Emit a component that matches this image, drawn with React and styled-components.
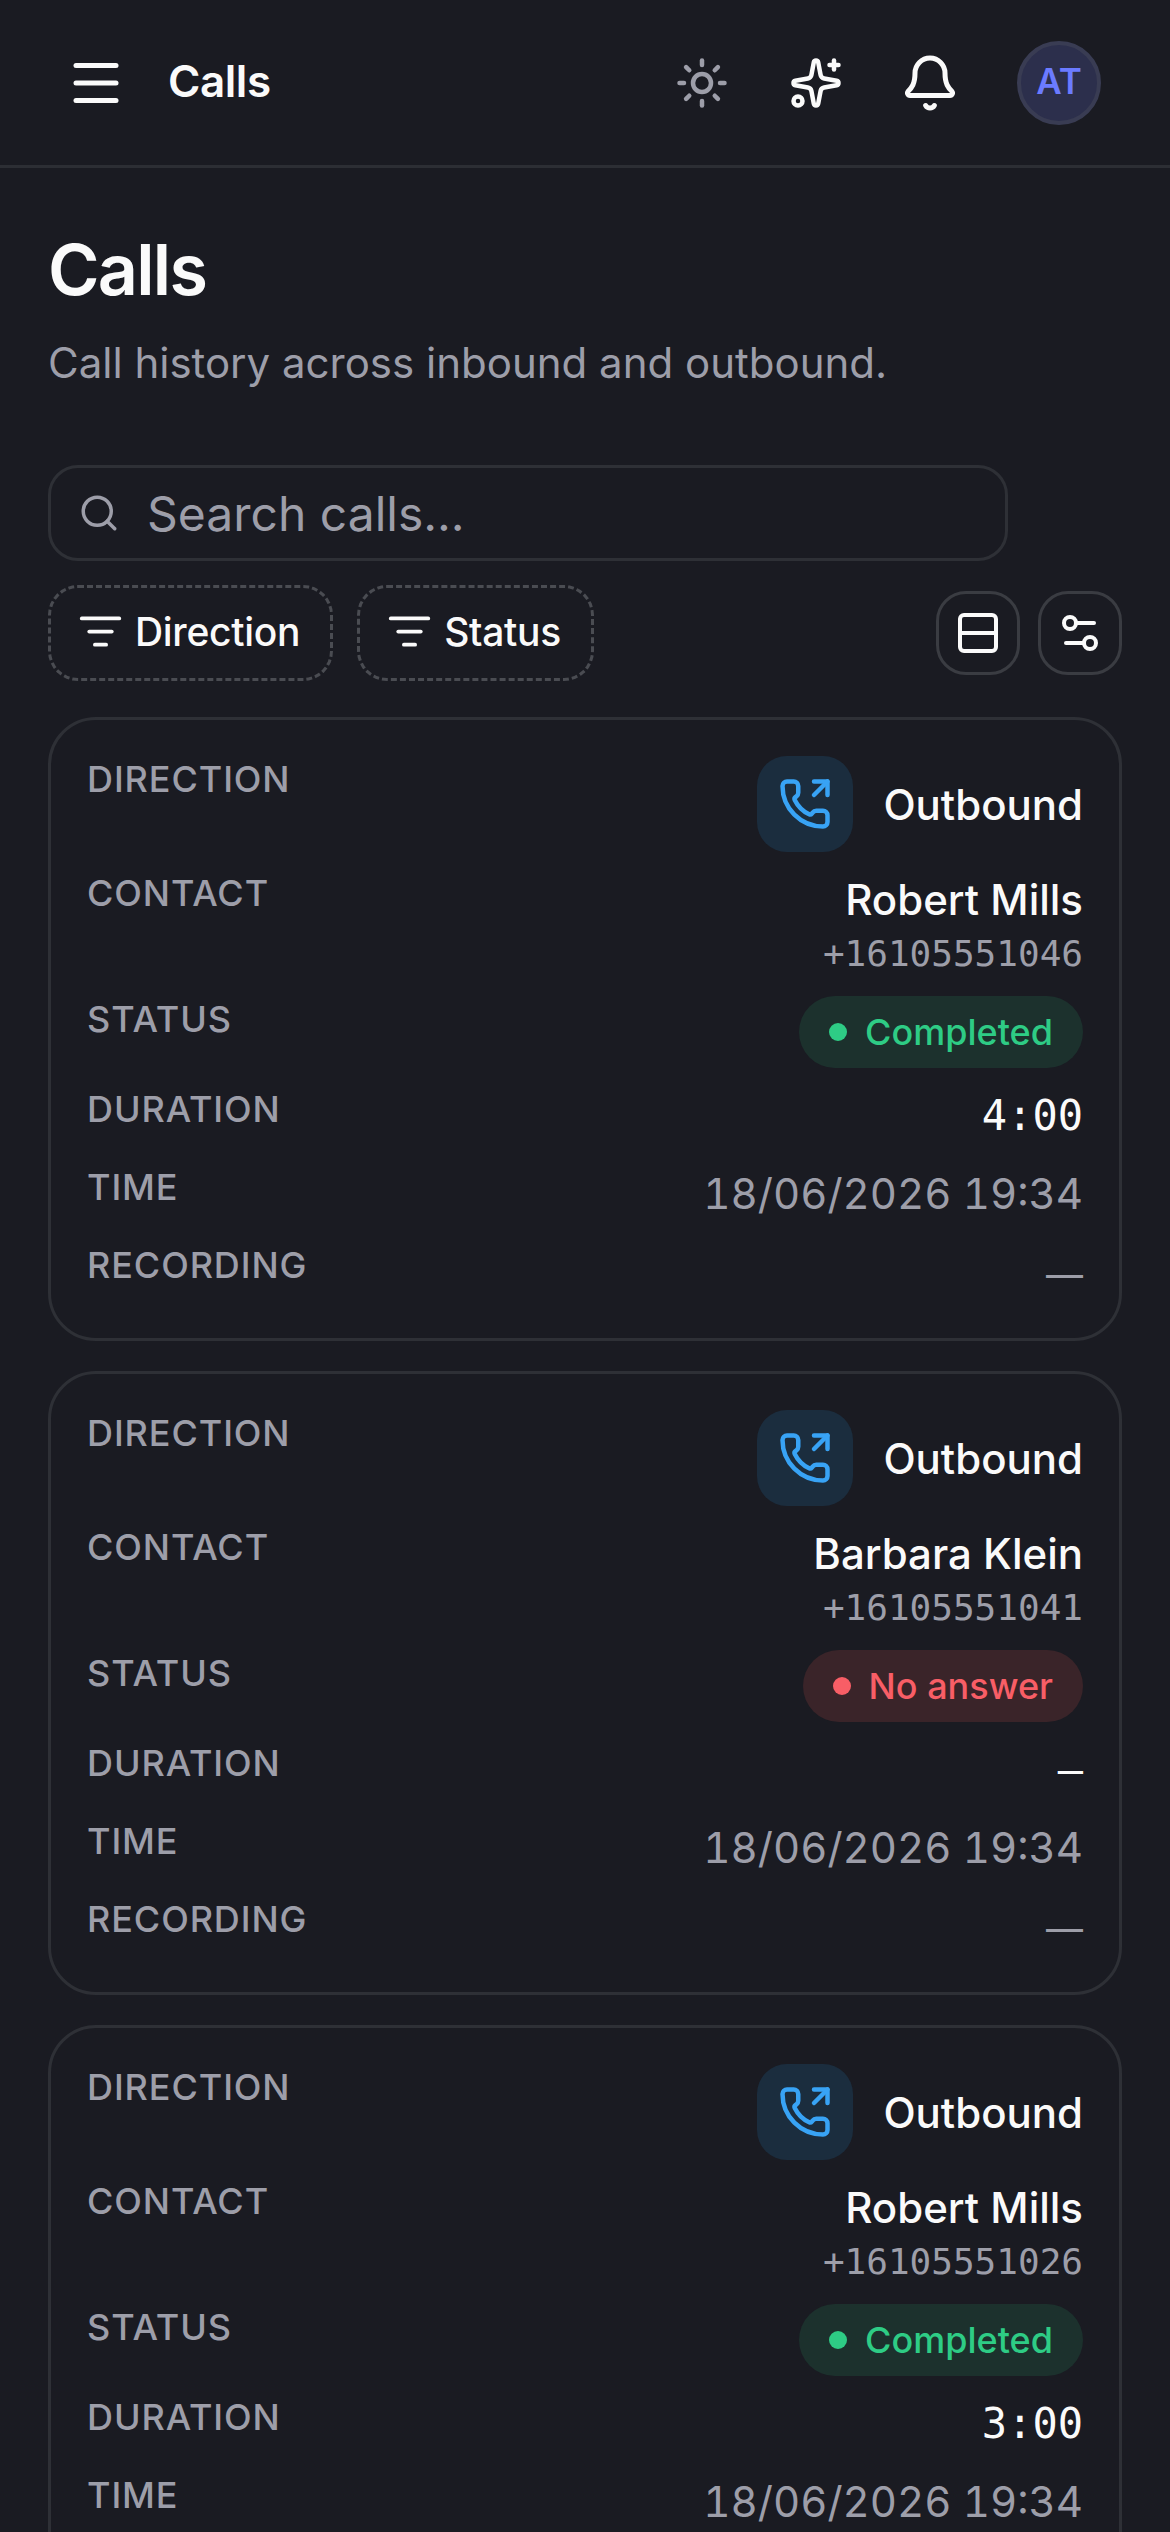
import styled, { createGlobalStyle } from "styled-components"
import { Menu, Sun, Sparkles, Bell, Search, ListFilter, Rows2, Settings2, PhoneOutgoing } from "lucide-react"

const GlobalStyle = createGlobalStyle`
    html, body {
        margin: 0;
        padding: 0;
        background-color: #1a1b22;
        height: 100%;
        overflow: hidden;
    }
    * {
        box-sizing: border-box;
    }
    body {
        font-family: Inter, "Noto Sans", sans-serif;
        color: #fafafa;
    }
`

const Header = styled.header`
    height: 168px;
    border-bottom: 3px solid #2c2e34;
    display: flex;
    align-items: center;
    justify-content: space-between;
    padding: 0 69px 0 66px;
`
const HeaderLeft = styled.div`
    display: flex;
    align-items: center;
    gap: 42px;
`
const HeaderTitle = styled.div`
    font-size: 44px;
    line-height: 54px;
    font-weight: 600;
    letter-spacing: -0.45px;
    margin-bottom: 4px;
`
const HeaderRight = styled.div`
    display: flex;
    align-items: center;
    gap: 54px;
`
const IconSlot = styled.div`
    width: 60px;
    height: 60px;
    display: flex;
    align-items: center;
    justify-content: center;
    color: ${(p) => (p.$muted ? "#9d9ea9" : "#fafafa")};
`
const Avatar = styled.div`
    width: 84px;
    height: 84px;
    border-radius: 50%;
    background-color: #2c2f4c;
    border: 4px solid #393c53;
    color: #6b7bff;
    font-size: 35px;
    font-weight: 600;
    padding-bottom: 4px;
    display: flex;
    align-items: center;
    justify-content: center;
    margin-left: 3px;
`
const Main = styled.main`
    padding: 60px 48px 0;
`
const PageTitle = styled.h1`
    margin: 0;
    font-size: 70px;
    line-height: 84px;
    font-weight: 600;
    letter-spacing: -1.75px;
`
const Subtitle = styled.p`
    margin: 21px 0 72px;
    font-size: 42px;
    line-height: 60px;
    color: #9d9ea9;
`
const SearchBox = styled.div`
    width: 960px;
    height: 96px;
    border: 3px solid #2e3036;
    border-radius: 30px;
    display: flex;
    align-items: center;
    gap: 27px;
    padding: 0 27px;
    font-size: 48px;
    color: #9d9ea9;
    margin-bottom: 24px;
`
const Toolbar = styled.div`
    display: flex;
    align-items: center;
    justify-content: space-between;
    margin-bottom: 36px;
`
const Filters = styled.div`
    display: flex;
    gap: 24px;
`
const FilterPill = styled.div`
    height: 96px;
    border: 3px dashed #4a4c52;
    border-radius: 30px;
    display: flex;
    align-items: center;
    gap: 12px;
    padding: 0 30px 4px 27px;
    font-size: 39px;
    font-weight: 500;
    letter-spacing: -0.3px;
`
const ViewButtons = styled.div`
    display: flex;
    gap: 18px;
`
const ViewButton = styled.div`
    width: 84px;
    height: 84px;
    border: 3px solid #3a3c42;
    border-radius: 30px;
    display: flex;
    align-items: center;
    justify-content: center;
`
const CardList = styled.div`
    display: flex;
    flex-direction: column;
    gap: 30px;
`
const Card = styled.article`
    border: 3px solid #2e3036;
    border-radius: 48px;
    padding: 36px;
    display: flex;
    flex-direction: column;
    gap: 18px;
`
const Row = styled.div`
    display: flex;
    justify-content: space-between;
    align-items: flex-start;
`
const Label = styled.div`
    font-size: 36px;
    line-height: 46px;
    font-weight: 500;
    letter-spacing: 0.9px;
    text-transform: uppercase;
    color: #9d9ea9;
`
const DirectionValue = styled.div`
    display: flex;
    align-items: center;
    gap: 30px;
    font-size: 42px;
    font-weight: 500;
`
const IconBox = styled.div`
    width: 96px;
    height: 96px;
    border-radius: 30px;
    background-color: #1b2d3e;
    color: #38a3f5;
    display: flex;
    align-items: center;
    justify-content: center;
`
const Contact = styled.div`
    text-align: right;
`
const ContactName = styled.div`
    font-size: 42px;
    line-height: 60px;
    font-weight: 500;
`
const Phone = styled.div`
    font-family: "DejaVu Sans Mono", monospace;
    font-size: 36px;
    line-height: 48px;
    color: #9d9ea9;
`
const Badge = styled.div`
    height: 72px;
    border-radius: 36px;
    padding: 0 30px;
    display: flex;
    align-items: center;
    gap: 18px;
    font-size: 36px;
    font-weight: 500;
    color: ${(p) => (p.$tone === "green" ? "#2ecc85" : "#f85e66")};
    background-color: ${(p) => (p.$tone === "green" ? "#1c312d" : "#3a2429")};
`
const Dot = styled.span`
    width: 18px;
    height: 18px;
    border-radius: 50%;
    background-color: currentColor;
`
const Duration = styled.div`
    font-family: "DejaVu Sans Mono", monospace;
    font-size: 42px;
    line-height: 60px;
`
const Muted = styled.div`
    font-size: 42px;
    line-height: 60px;
    font-variant-numeric: tabular-nums;
    color: #9d9ea9;
`
const EmptyDash = styled.div`
    font-size: 37px;
    line-height: 66px;
    margin-bottom: -6px;
    color: #9d9ea9;
`

const calls = [
    { name: "Robert Mills", phone: "+16105551046", status: "Completed", tone: "green", duration: "4:00" },
    { name: "Barbara Klein", phone: "+16105551041", status: "No answer", tone: "red", duration: "—" },
    { name: "Robert Mills", phone: "+16105551026", status: "Completed", tone: "green", duration: "3:00" },
]

function CallCard({ call }) {
    return <Card>
        <Row>
            <Label>Direction</Label>
            <DirectionValue>
                <IconBox><PhoneOutgoing size={54} /></IconBox>
                Outbound
            </DirectionValue>
        </Row>
        <Row>
            <Label>Contact</Label>
            <Contact>
                <ContactName>{call.name}</ContactName>
                <Phone>{call.phone}</Phone>
            </Contact>
        </Row>
        <Row>
            <Label>Status</Label>
            <Badge $tone={call.tone}><Dot />{call.status}</Badge>
        </Row>
        <Row>
            <Label>Duration</Label>
            <Duration>{call.duration}</Duration>
        </Row>
        <Row>
            <Label>Time</Label>
            <Muted>18/06/2026 19:34</Muted>
        </Row>
        <Row>
            <Label>Recording</Label>
            <EmptyDash>—</EmptyDash>
        </Row>
    </Card>
}

export default function App() {
    return <>
        <GlobalStyle />
        <Header>
            <HeaderLeft>
                <Menu size={60} />
                <HeaderTitle>Calls</HeaderTitle>
            </HeaderLeft>
            <HeaderRight>
                <IconSlot $muted><Sun size={54} /></IconSlot>
                <IconSlot><Sparkles size={54} /></IconSlot>
                <IconSlot><Bell size={60} /></IconSlot>
                <Avatar>AT</Avatar>
            </HeaderRight>
        </Header>
        <Main>
            <PageTitle>Calls</PageTitle>
            <Subtitle>Call history across inbound and outbound.</Subtitle>
            <SearchBox>
                <Search size={42} />
                Search calls...
            </SearchBox>
            <Toolbar>
                <Filters>
                    <FilterPill><ListFilter size={45} />Direction</FilterPill>
                    <FilterPill><ListFilter size={45} />Status</FilterPill>
                </Filters>
                <ViewButtons>
                    <ViewButton><Rows2 size={48} /></ViewButton>
                    <ViewButton><Settings2 size={48} /></ViewButton>
                </ViewButtons>
            </Toolbar>
            <CardList>
                {calls.map((call, idx) => <CallCard key={idx} call={call} />)}
            </CardList>
        </Main>
    </>
}
